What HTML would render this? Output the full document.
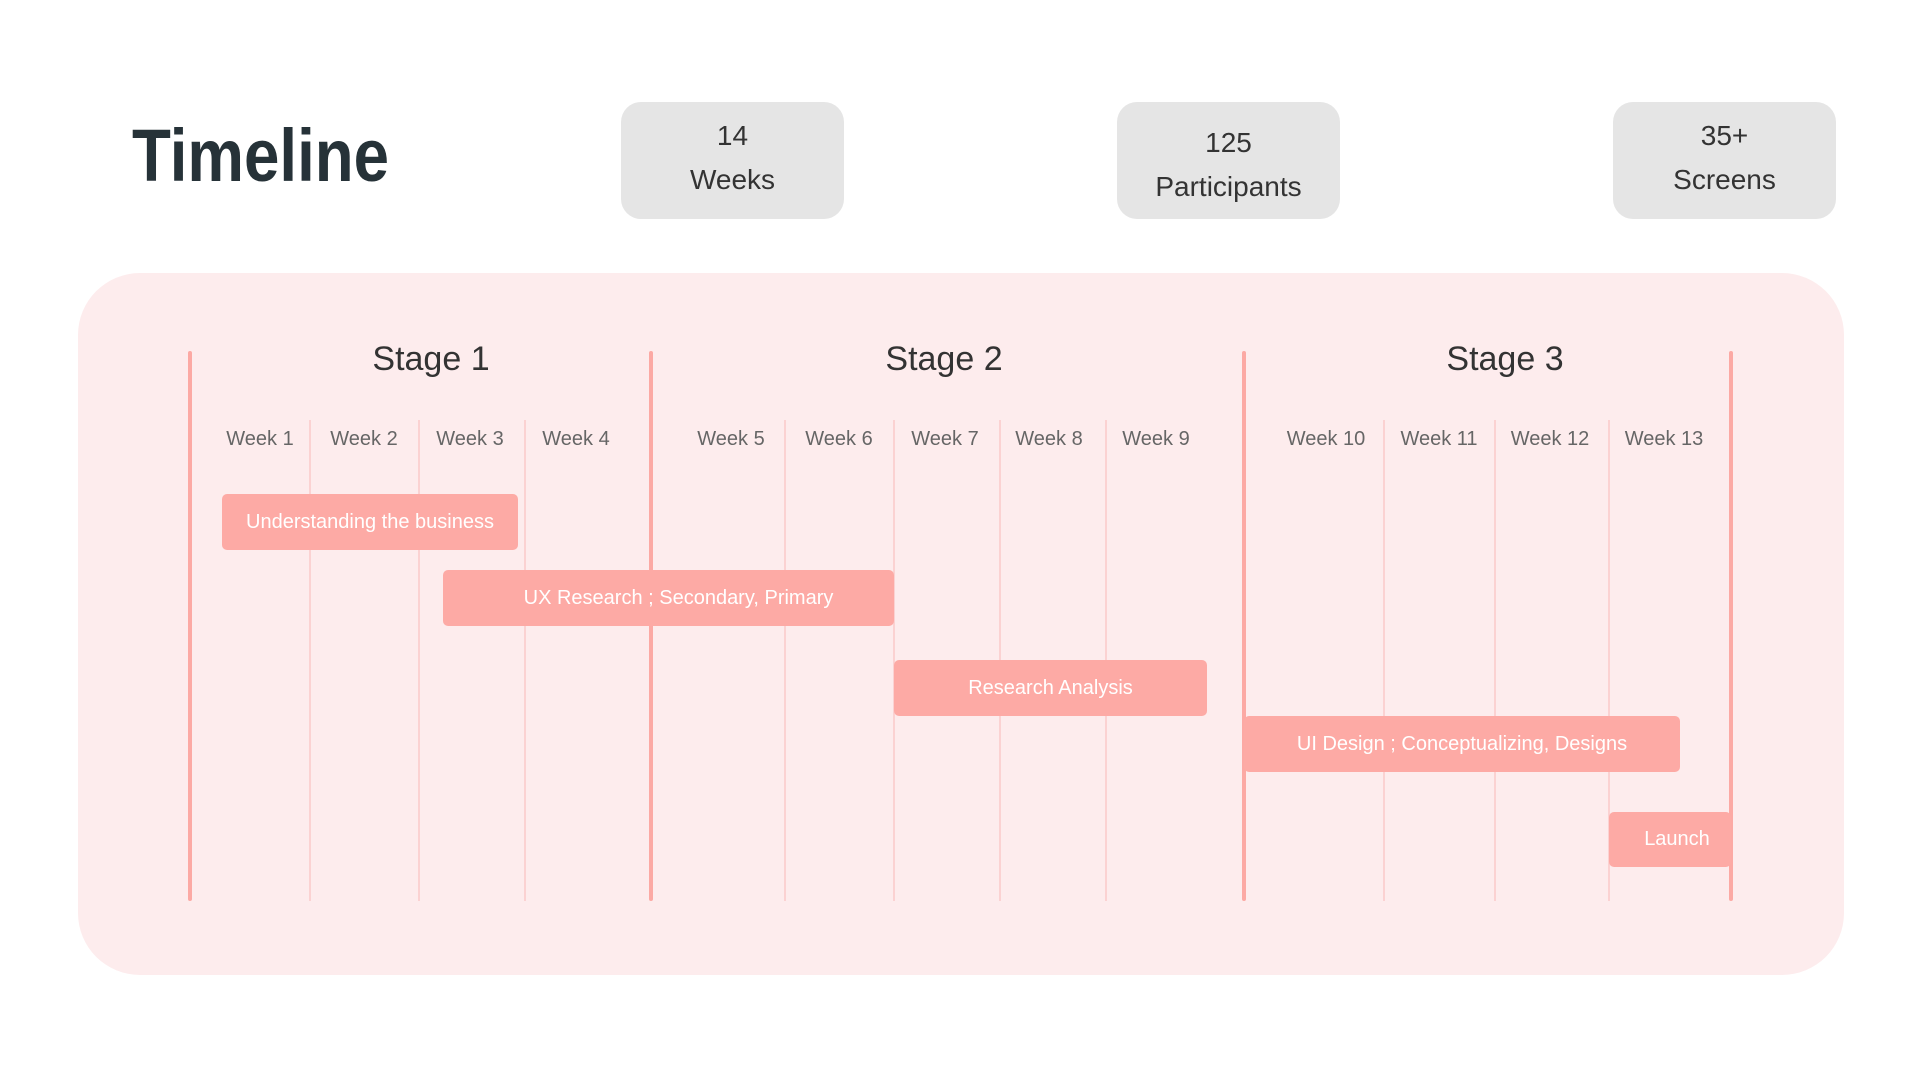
<!DOCTYPE html>
<html><head><style>
body{margin:0;width:1920px;height:1080px;background:#fff;position:relative;overflow:hidden;font-family:"Liberation Sans",sans-serif}
.a{position:absolute}
.title{left:132px;top:112px;font-size:74px;font-weight:bold;color:#263238;transform:scaleX(.86);transform-origin:left top;line-height:88px}
.box{background:#e5e5e5;border-radius:20px;width:223px;height:117px;top:102px;color:#333;text-align:center;font-size:28px}
.box div{position:absolute;left:0;right:0}
.panel{left:78px;top:273px;width:1766px;height:702px;background:#fdeced;border-radius:62px}
.sl{width:4px;top:351px;height:550px;background:#fca9a4;border-radius:2px}
.wl{width:2px;top:420px;height:481px;background:#fbd2d2}
.st{font-size:34px;color:#333;top:340px;transform:translateX(-50%)}
.wk{font-size:20px;color:#666;top:428px;transform:translateX(-50%);white-space:nowrap}
.bar{background:#fdaaa5;border-radius:5px;color:#fff;font-size:20px;display:flex;align-items:center;justify-content:center;white-space:nowrap}
</style></head><body>
<div class="a title">Timeline</div>
<div class="a box" style="left:621px"><div style="top:18px">14</div><div style="top:62px">Weeks</div></div>
<div class="a box" style="left:1117px"><div style="top:25px">125</div><div style="top:69px">Participants</div></div>
<div class="a box" style="left:1613px"><div style="top:18px">35+</div><div style="top:62px">Screens</div></div>
<div class="a panel"></div>
<div class="a wl" style="left:309px"></div><div class="a wl" style="left:418px"></div><div class="a wl" style="left:524px"></div>
<div class="a wl" style="left:784px"></div><div class="a wl" style="left:893px"></div><div class="a wl" style="left:999px"></div><div class="a wl" style="left:1105px"></div>
<div class="a wl" style="left:1383px"></div><div class="a wl" style="left:1494px"></div><div class="a wl" style="left:1608px"></div>
<div class="a sl" style="left:188px"></div><div class="a sl" style="left:649px"></div><div class="a sl" style="left:1242px"></div><div class="a sl" style="left:1729px"></div>
<div class="a st" style="left:431px">Stage 1</div><div class="a st" style="left:944px">Stage 2</div><div class="a st" style="left:1505px">Stage 3</div>
<div class="a wk" style="left:260px">Week 1</div><div class="a wk" style="left:364px">Week 2</div><div class="a wk" style="left:470px">Week 3</div><div class="a wk" style="left:576px">Week 4</div>
<div class="a wk" style="left:731px">Week 5</div><div class="a wk" style="left:839px">Week 6</div><div class="a wk" style="left:945px">Week 7</div><div class="a wk" style="left:1049px">Week 8</div><div class="a wk" style="left:1156px">Week 9</div>
<div class="a wk" style="left:1326px">Week 10</div><div class="a wk" style="left:1439px">Week 11</div><div class="a wk" style="left:1550px">Week 12</div><div class="a wk" style="left:1664px">Week 13</div>
<div class="a bar" style="left:222px;top:494px;width:296px;height:56px">Understanding the business</div>
<div class="a bar" style="left:443px;top:570px;width:451px;height:56px;padding-left:20px;box-sizing:border-box">UX Research ; Secondary, Primary</div>
<div class="a bar" style="left:894px;top:660px;width:313px;height:56px">Research Analysis</div>
<div class="a bar" style="left:1244px;top:716px;width:436px;height:56px">UI Design ; Conceptualizing, Designs</div>
<div class="a bar" style="left:1609px;top:812px;width:122px;height:55px;padding-left:14px;box-sizing:border-box">Launch</div>
</body></html>
